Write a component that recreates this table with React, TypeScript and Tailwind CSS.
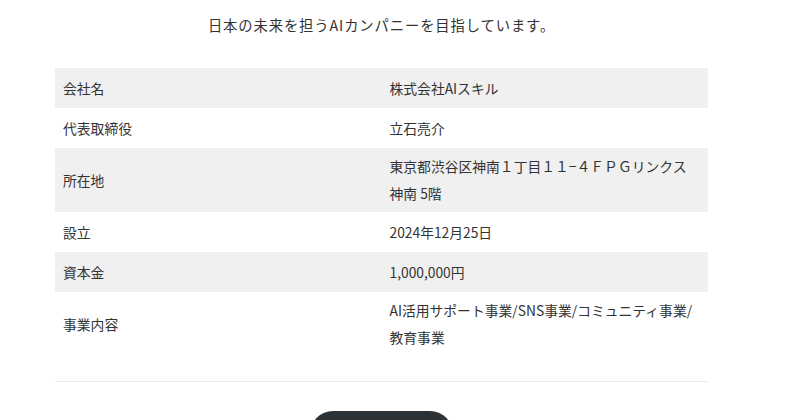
const ROWS = [
  { label: "会社名", value: ["株式会社AIスキル"] },
  { label: "代表取締役", value: ["立石亮介"] },
  { label: "所在地", value: ["東京都渋谷区神南１丁目１１−４ＦＰＧリンクス", "神南 5階"] },
  { label: "設立", value: ["2024年12月25日"] },
  { label: "資本金", value: ["1,000,000円"] },
  { label: "事業内容", value: ["AI活用サポート事業/SNS事業/コミュニティ事業/", "教育事業"] }
];

export default function App() {
  return (
    <main className="min-h-screen bg-white font-['Noto_Sans_CJK_JP','Noto_Sans',sans-serif] text-[#333]">
      <section className="ml-[55px] w-[653px]">
        <p className="pt-[11px] text-center text-[14.3px] leading-[27px] tracking-[0.9px]">
          日本の未来を担うAIカンパニーを目指しています。
        </p>

        <div className="mt-[30px] text-[13.8px] leading-[27px]">
          {ROWS.map((row, i) => (
            <div
              key={row.label}
              className={`grid min-h-[40px] grid-cols-2 ${i % 2 === 0 ? "bg-[#f0f0f0]" : "bg-white"}`}
            >
              <div className="flex items-center px-2 py-[5px]">{row.label}</div>
              <div className="flex flex-col justify-center px-2 py-[5px]">
                {row.value.map((line) => (
                  <span key={line} className="whitespace-nowrap">
                    {line}
                  </span>
                ))}
              </div>
            </div>
          ))}
        </div>

        <div className="mt-[25px] border-t border-[#ececec]" />

        <div className="mt-[29px] flex justify-center">
          <button aria-label="お問い合わせ" className="h-[46px] w-[143px] rounded-full bg-[#2d3237]" />
        </div>
      </section>
    </main>
  );
}
